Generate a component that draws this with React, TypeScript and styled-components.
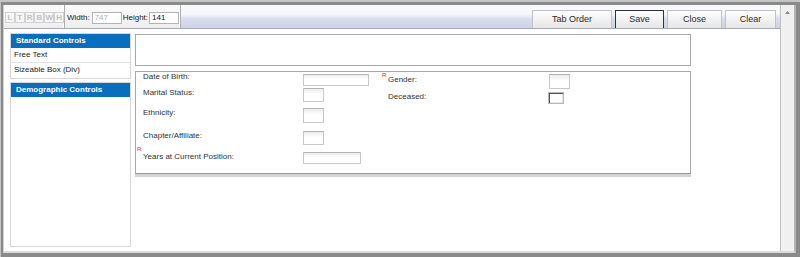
import React from 'react';
import styled, { createGlobalStyle } from 'styled-components';

const GlobalStyle = createGlobalStyle`
  html, body { margin: 0; padding: 0; background: #fff; }
  body { font-family: "Liberation Sans", Arial, sans-serif; }
  * { box-sizing: border-box; }
`;

const Frame = styled.div`
  width: 800px;
  height: 257px;
  border-style: solid;
  border-color: #c4c4c4;
  border-width: 2px 0 0 1px;
`;

const Shell = styled.div`
  height: 100%;
  border-style: solid;
  border-color: #8a8a8a;
  border-width: 3px 4px 4px 2px;
`;

const Window = styled.div`
  height: 100%;
  display: flex;
  background: #fff;
  border-style: solid;
  border-color: #dcdcdc #b4b4b4 #dcdcdc #d0d0d0;
  border-width: 0 2px 2px 1px;
`;

const Column = styled.div`
  flex: 1;
  display: flex;
  flex-direction: column;
  min-width: 0;
`;

const Scrollbar = styled.div`
  width: 14px;
  background: #f0f0f0;
  border-left: 1px solid #c0c0c0;
  display: flex;
  justify-content: center;
  padding-top: 6px;
`;

const Toolbar = styled.div`
  height: 24px;
  display: flex;
  border-bottom: 1px solid #a4acbc;
`;

const Segment = styled.div<{ $w: number }>`
  width: ${({ $w }) => $w}px;
  display: flex;
  align-items: flex-start;
  padding: 7px 0 0 1px;
  background: linear-gradient(#fbfbfb, #eeeeee);
  border-right: 1px solid #b0b0b0;
  box-shadow: inset -1px 0 0 #fff;
`;

const Letter = styled.div`
  width: 10px;
  height: 11px;
  border: 1px solid #d2d2d2;
  background: #f6f6f6;
  color: #c0c0c0;
  font-size: 8px;
  font-weight: bold;
  line-height: 9px;
  text-align: center;
`;

const SizeLabel = styled.span<{ $gap: number }>`
  font-size: 8px;
  line-height: 12px;
  color: #222;
  margin: 0 ${({ $gap }) => $gap}px 0 1px;
`;

const SizeInput = styled.div<{ $muted?: boolean }>`
  width: 30px;
  height: 12px;
  border: 1px solid #b4b4b4;
  background: #fff;
  font-size: 8px;
  line-height: 10px;
  padding-left: 2px;
  color: ${({ $muted }) => ($muted ? '#b0b0b0' : '#111')};
`;

const ButtonBar = styled.div`
  flex: 1;
  display: flex;
  justify-content: flex-end;
  align-items: flex-end;
  gap: 3px;
  padding-right: 4px;
  background: linear-gradient(#fcfcfe 0%, #f3f5fa 42%, #d9dfee 58%, #cbd2e6 100%);
`;

const Button = styled.div<{ $w: number; $focus?: boolean }>`
  width: ${({ $w }) => $w}px;
  height: 18px;
  border: 1px solid ${({ $focus }) => ($focus ? '#333' : '#c2c2c2')};
  border-bottom-width: 0;
  background: linear-gradient(#fefefe, #e6e6e6);
  font-size: 9px;
  line-height: 17px;
  text-align: center;
  color: #2a2a2a;
`;

const Body = styled.div`
  flex: 1;
  display: flex;
  padding: 4px 0 4px 6px;
`;

const Panel = styled.div`
  width: 121px;
  display: flex;
  flex-direction: column;
  gap: 3px;
`;

const Group = styled.div<{ $grow?: boolean }>`
  border: 1px solid #d6d6d6;
  flex: ${({ $grow }) => ($grow ? 1 : 'none')};
`;

const GroupHeader = styled.div`
  height: 14px;
  background: #0b6ebd;
  color: #fff;
  font-size: 8px;
  font-weight: bold;
  line-height: 14px;
  padding-left: 5px;
`;

const Item = styled.div<{ $last?: boolean }>`
  height: 15px;
  font-size: 8px;
  line-height: 14px;
  color: #222;
  padding-left: 3px;
  border-bottom: ${({ $last }) => ($last ? 'none' : '1px solid #e4e4e4')};
`;

const Main = styled.div`
  width: 556px;
  margin-left: 4px;
  padding-top: 1px;
  display: flex;
  flex-direction: column;
  gap: 5px;
`;

const TopBox = styled.div`
  height: 32px;
  border: 1px solid #a8a8a8;
`;

const FormBox = styled.div`
  display: flex;
  border: 1px solid #a8a8a8;
  border-bottom-color: #9a9a9a;
  box-shadow: 0 3px 0 #d4d4d4;
  padding: 2px 0 9px 1px;
`;

const FormTable = styled.div<{ $w?: number }>`
  width: ${({ $w }) => ($w ? `${$w}px` : 'auto')};
  display: flex;
  flex-direction: column;
`;

const Row = styled.div<{ $h: number }>`
  height: ${({ $h }) => $h}px;
  display: flex;
  align-items: flex-start;
`;

const Marker = styled.span<{ $dy?: number }>`
  width: 6px;
  font-size: 6px;
  line-height: 6px;
  color: #e03434;
  margin-top: ${({ $dy }) => $dy ?? 0}px;
`;

const Label = styled.span<{ $w: number; $dy?: number }>`
  width: ${({ $w }) => $w}px;
  font-size: 8px;
  line-height: 10px;
  color: #333;
  margin-top: ${({ $dy }) => $dy ?? 0}px;
`;

const Field = styled.div<{ $w: number; $h: number }>`
  width: ${({ $w }) => $w}px;
  height: ${({ $h }) => $h}px;
  border: 1px solid #c8c8c8;
  border-top-color: #b4b4b4;
  background: linear-gradient(#ececec, #fff 45%);
`;

const Checkbox = styled.div`
  width: 16px;
  height: 12px;
  margin-left: -1px;
  border: 1px solid #b8b8b8;
  background: #fff;
  box-shadow: inset 1px 1px 0 #555, inset -1px -1px 0 #e8e8e8;
`;

const letters = ['L', 'T', 'R', 'B', 'W', 'H'];

export default function App() {
  return (
    <>
      <GlobalStyle />
      <Frame>
        <Shell>
          <Window>
            <Column>
              <Toolbar>
                <Segment $w={61}>
                  {letters.map((l) => (
                    <Letter key={l}>{l}</Letter>
                  ))}
                </Segment>
                <Segment $w={116}>
                  <SizeLabel $gap={2}>Width:</SizeLabel>
                  <SizeInput $muted>747</SizeInput>
                  <SizeLabel $gap={1}>Height:</SizeLabel>
                  <SizeInput>141</SizeInput>
                </Segment>
                <ButtonBar>
                  <Button $w={80}>Tab Order</Button>
                  <Button $w={49} $focus>Save</Button>
                  <Button $w={55}>Close</Button>
                  <Button $w={51}>Clear</Button>
                </ButtonBar>
              </Toolbar>
              <Body>
                <Panel>
                  <Group>
                    <GroupHeader>Standard Controls</GroupHeader>
                    <Item>Free Text</Item>
                    <Item $last>Sizeable Box (Div)</Item>
                  </Group>
                  <Group $grow>
                    <GroupHeader>Demographic Controls</GroupHeader>
                  </Group>
                </Panel>
                <Main>
                  <TopBox />
                  <FormBox>
                    <FormTable $w={245}>
                      <Row $h={14}>
                        <Marker />
                        <Label $w={160} $dy={-2}>Date of Birth:</Label>
                        <Field $w={66} $h={12} />
                      </Row>
                      <Row $h={20}>
                        <Marker />
                        <Label $w={160}>Marital Status:</Label>
                        <Field $w={21} $h={14} />
                      </Row>
                      <Row $h={23}>
                        <Marker />
                        <Label $w={160}>Ethnicity:</Label>
                        <Field $w={21} $h={15} />
                      </Row>
                      <Row $h={21}>
                        <Marker />
                        <Label $w={160}>Chapter/Affiliate:</Label>
                        <Field $w={21} $h={14} />
                      </Row>
                      <Row $h={12}>
                        <Marker $dy={-6}>R</Marker>
                        <Label $w={160}>Years at Current Position:</Label>
                        <Field $w={58} $h={12} />
                      </Row>
                    </FormTable>
                    <FormTable>
                      <Row $h={18}>
                        <Marker $dy={-2}>R</Marker>
                        <Label $w={161} $dy={1}>Gender:</Label>
                        <Field $w={21} $h={15} />
                      </Row>
                      <Row $h={12}>
                        <Marker />
                        <Label $w={161}>Deceased:</Label>
                        <Checkbox />
                      </Row>
                    </FormTable>
                  </FormBox>
                </Main>
              </Body>
            </Column>
            <Scrollbar>
              <svg width="5" height="3" viewBox="0 0 5 3">
                <path d="M0 3 L2.5 0 L5 3 Z" fill="#888" />
              </svg>
            </Scrollbar>
          </Window>
        </Shell>
      </Frame>
    </>
  );
}
